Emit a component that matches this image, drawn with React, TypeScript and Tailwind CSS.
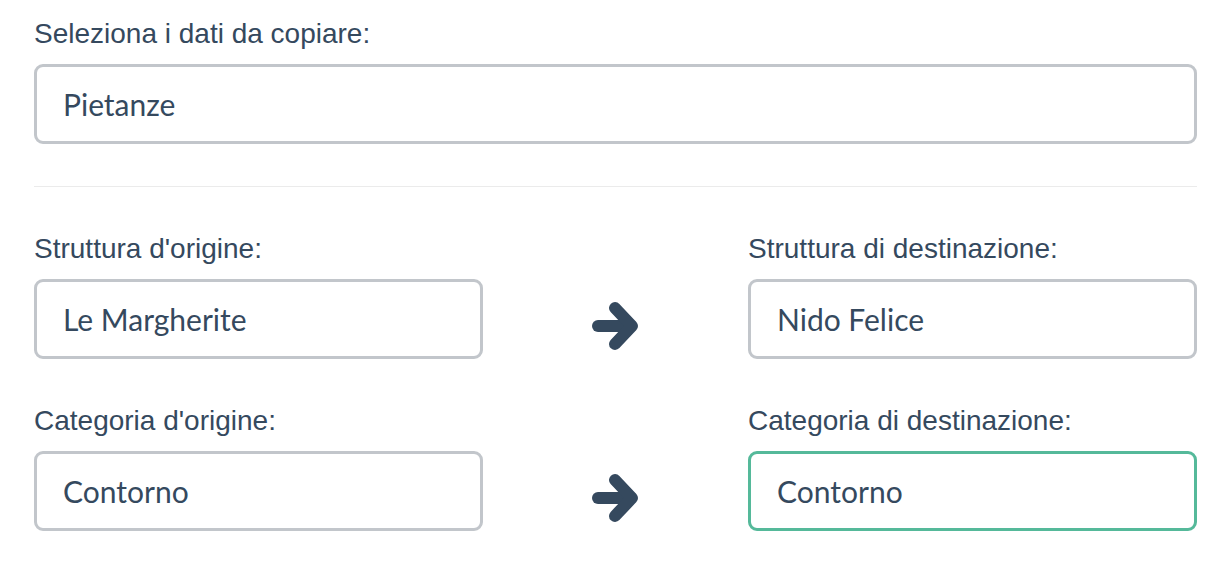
import React from "react";

const labelCls = "block text-[28px] leading-[32px] text-[#35495e] mb-[14px]";
const boxCls =
  "h-[80px] w-full rounded-[9px] border-[3px] bg-white pl-[26px] flex items-center text-[30px] text-[#35495e]";

function Field({ label, value, active }: { label: string; value: string; active?: boolean }) {
  return (
    <div>
      <label className={labelCls} style={{ fontFamily: "'Liberation Sans', Arial, sans-serif" }}>
        {label}
      </label>
      <div
        className={`${boxCls} ${active ? "border-[#55b99a]" : "border-[#c2c6cb]"}`}
        style={{ fontFamily: "Lato, 'Noto Sans', sans-serif" }}
      >
        {value}
      </div>
    </div>
  );
}

function Arrow() {
  return (
    <div className="flex items-end justify-center pb-[8px]">
      <svg width="48" height="50" viewBox="0 0 48 50" fill="none">
        <path d="M6 25H39" stroke="#35495e" strokeWidth="12" strokeLinecap="round" />
        <path
          d="M23 7L40 25L23 43"
          stroke="#35495e"
          strokeWidth="12"
          strokeLinecap="round"
          strokeLinejoin="round"
        />
      </svg>
    </div>
  );
}

export default function App() {
  return (
    <div className="w-[1226px] h-[568px] bg-white pl-[34px] pr-[29px] pt-[18px]">
      <Field label="Seleziona i dati da copiare:" value="Pietanze" />
      <hr className="mt-[42px] mb-[46px] border-0 border-t border-[#ebebeb]" />
      <div className="grid grid-cols-[449px_1fr_449px] gap-y-[46px]">
        <Field label="Struttura d'origine:" value="Le Margherite" />
        <Arrow />
        <Field label="Struttura di destinazione:" value="Nido Felice" />
        <Field label="Categoria d'origine:" value="Contorno" />
        <Arrow />
        <Field label="Categoria di destinazione:" value="Contorno" active />
      </div>
    </div>
  );
}
